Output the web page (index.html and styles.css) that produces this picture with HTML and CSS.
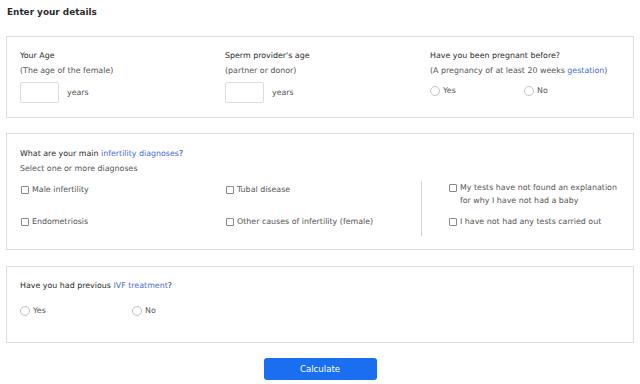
FILE: index.html
```html
<!DOCTYPE html>
<html lang="en">
<head>
  <meta charset="UTF-8" />
  <meta name="viewport" content="width=device-width, initial-scale=1.0"/>
  <title>IVF Calculator</title>
  <link rel="stylesheet" href="styles.css">
</head>
<body>
  <div class="page">
    <h1>Enter your details</h1>

    <!-- Ages and pregnancy -->
    <div class="caixa caixa-idades">
      <div class="campo">
        <div class="titulo">Your Age</div>
        <div class="sub">(The age of the female)</div>
        <div class="idade"><input type="text" class="entrada" /><span>years</span></div>
      </div>
      <div class="campo">
        <div class="titulo">Sperm provider's age</div>
        <div class="sub">(partner or donor)</div>
        <div class="idade"><input type="text" class="entrada" /><span>years</span></div>
      </div>
      <div class="campo">
        <div class="titulo">Have you been pregnant before?</div>
        <div class="sub">(A pregnancy of at least 20 weeks <a href="#">gestation</a>)</div>
        <div class="opcoes">
          <label class="radio"><span class="circulo"></span>Yes</label>
          <label class="radio"><span class="circulo"></span>No</label>
        </div>
      </div>
    </div>

    <!-- Diagnoses -->
    <div class="caixa caixa-diagnosticos">
      <div class="titulo">What are your main <a href="#">infertility diagnoses</a>?</div>
      <div class="sub">Select one or more diagnoses</div>
      <div class="grade">
        <div class="coluna">
          <label class="check"><span class="quadrado"></span>Male infertility</label>
          <label class="check"><span class="quadrado"></span>Endometriosis</label>
        </div>
        <div class="coluna">
          <label class="check"><span class="quadrado"></span>Tubal disease</label>
          <label class="check"><span class="quadrado"></span>Other causes of infertility (female)</label>
        </div>
        <div class="coluna coluna-extra">
          <label class="check"><span class="quadrado"></span><span>My tests have not found an explanation<br />for why I have not had a baby</span></label>
          <label class="check"><span class="quadrado"></span>I have not had any tests carried out</label>
        </div>
      </div>
    </div>

    <!-- IVF -->
    <div class="caixa caixa-ivf">
      <div class="titulo">Have you had previous <a href="#">IVF treatment</a>?</div>
      <div class="opcoes">
        <label class="radio"><span class="circulo"></span>Yes</label>
        <label class="radio"><span class="circulo"></span>No</label>
      </div>
    </div>

    <div class="botoes">
      <button id="btnCalcular">Calculate</button>
    </div>
  </div>
</body>
</html>
```

FILE: styles.css
```css
body {
  margin: 0;
  font-family: "DejaVu Sans", sans-serif;
  background-color: #fff;
  color: #555;
  font-size: 7.9px;
}

.page {
  padding: 5px 6px 0 6px;
}

h1 {
  font-size: 8.9px;
  font-weight: bold;
  color: #2b2b2b;
  margin: 0 0 0 1px;
  line-height: 14px;
}

a {
  color: #4a6bd6;
  text-decoration: none;
}

.caixa {
  border: 1px solid #dcdcdc;
  padding: 11px 14px 14px 13px;
}

.caixa-idades {
  margin-top: 17px;
  display: grid;
  grid-template-columns: 205px 205px 1fr;
}

.titulo {
  color: #2b2b2b;
  line-height: 15px;
}

.sub {
  line-height: 15px;
}

.idade {
  display: flex;
  align-items: center;
  margin-top: 4px;
}

.entrada {
  width: 37px;
  height: 19px;
  border: 1px solid #dcdcdc;
  border-radius: 2px;
  margin: 0 8px 0 0;
  padding: 0;
}

.opcoes {
  display: flex;
  margin-top: 6px;
}

.radio {
  display: flex;
  align-items: center;
  width: 94px;
  line-height: 13px;
}

.circulo {
  width: 8px;
  height: 8px;
  border: 1px solid #c4c4c4;
  border-radius: 50%;
  margin-right: 3px;
}

.caixa-diagnosticos {
  margin-top: 15px;
  padding: 12px 14px 13px 13px;
}

.grade {
  display: grid;
  grid-template-columns: 205px 196px 1fr;
  margin-top: 7px;
}

.coluna {
  display: flex;
  flex-direction: column;
  gap: 19px;
}

.coluna-extra {
  border-left: 1px solid #d4d4d4;
  padding: 0 0 8px 26px;
  gap: 8px;
  margin-top: -2px;
}

.check {
  display: flex;
  align-items: flex-start;
  line-height: 13px;
}

.quadrado {
  flex: none;
  width: 6px;
  height: 6px;
  border: 1px solid #888;
  border-radius: 1px;
  margin: 3px 3px 0 1px;
}

.caixa-ivf {
  margin-top: 16px;
  padding: 11px 14px 25px 13px;
}

.caixa-ivf .opcoes {
  margin-top: 11px;
}

.caixa-ivf .radio {
  width: 112px;
}

.botoes {
  text-align: center;
  margin-top: 15px;
}

button {
  width: 113px;
  height: 22px;
  background-color: #1a6ff0;
  color: #fff;
  border: none;
  border-radius: 3px;
  font-family: "DejaVu Sans", sans-serif;
  font-size: 8.6px;
  cursor: pointer;
}
```
